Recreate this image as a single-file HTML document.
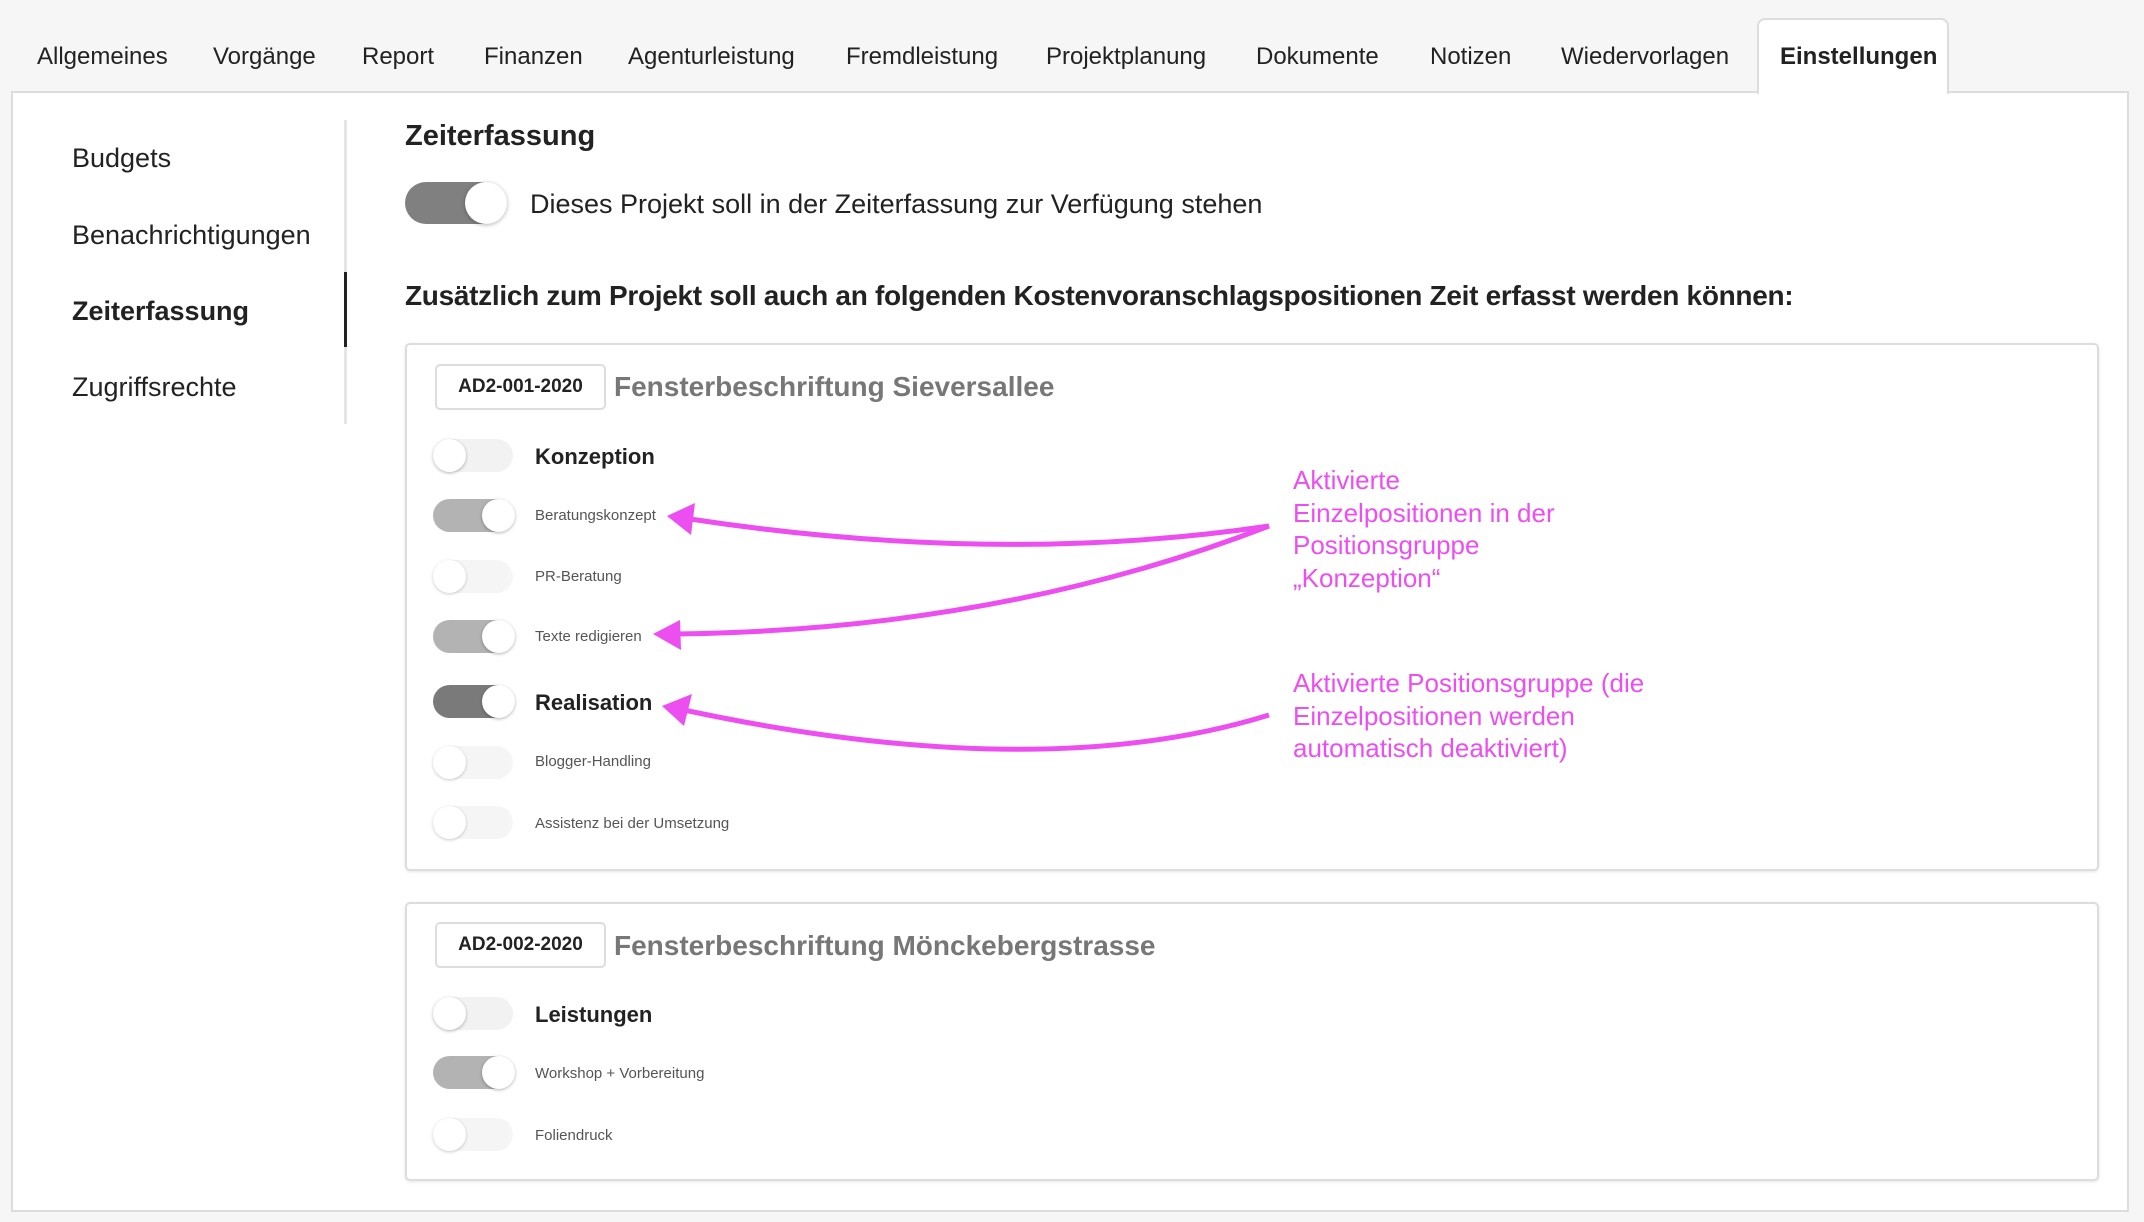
<!DOCTYPE html>
<html><head><meta charset="utf-8"><style>
*{margin:0;padding:0;box-sizing:border-box}
body{width:2144px;height:1222px;background:#f6f6f6;font-family:"Liberation Sans",sans-serif;color:#222;position:relative;overflow:hidden}
.a{position:absolute;white-space:nowrap}
.tab{font-size:24px;top:43px;color:#222}
.panel{position:absolute;left:11px;top:91px;width:2118px;height:1121px;background:#fff;border:2px solid #ddd}
.atab{position:absolute;left:1757px;top:18px;width:192px;height:76px;background:#fff;border:2px solid #ddd;border-bottom:none;border-radius:8px 8px 0 0;z-index:2}
.side{font-size:27px;left:72px;color:#222}
.card{position:absolute;left:405px;width:1694px;background:#fff;border:2px solid #ddd;border-radius:5px;box-shadow:0 1px 3px rgba(0,0,0,.1)}
.badge{position:absolute;left:435px;width:171px;height:46px;border:2px solid #ddd;border-radius:5px;font-size:19px;font-weight:bold;text-align:center;line-height:42px;background:#fff}
.title{font-size:28px;font-weight:bold;color:#777;left:614px}
.tg{position:absolute;left:433px;width:80px;height:33px;border-radius:17px;background:#f2f2f2}
.tg::after{content:"";position:absolute;top:0;width:33px;height:33px;border-radius:50%;background:#fff;box-shadow:0 1px 3px rgba(0,0,0,.3)}
.off::after{left:0}
.on::after{right:-2px}
.l{background:#b3b3b3}.d{background:#7a7a7a}
.gl{left:535px;font-size:22px;font-weight:bold}
.il{left:535px;font-size:15px;color:#555}
.ann{left:1293px;font-size:26px;color:#ec4ef0;line-height:32.5px}
</style></head><body>
<div class="panel"></div>
<div class="atab"></div>
<div class="a tab" style="left:37px">Allgemeines</div>
<div class="a tab" style="left:213px">Vorgänge</div>
<div class="a tab" style="left:362px">Report</div>
<div class="a tab" style="left:484px">Finanzen</div>
<div class="a tab" style="left:628px">Agenturleistung</div>
<div class="a tab" style="left:846px">Fremdleistung</div>
<div class="a tab" style="left:1046px">Projektplanung</div>
<div class="a tab" style="left:1256px">Dokumente</div>
<div class="a tab" style="left:1430px">Notizen</div>
<div class="a tab" style="left:1561px">Wiedervorlagen</div>
<div class="a tab" style="left:1780px;font-weight:bold;z-index:3">Einstellungen</div>

<div class="a side" style="top:143px">Budgets</div>
<div class="a side" style="top:220px">Benachrichtigungen</div>
<div class="a side" style="top:296px;font-weight:bold">Zeiterfassung</div>
<div class="a side" style="top:372px">Zugriffsrechte</div>
<div class="a" style="left:344px;top:120px;width:3px;height:304px;background:#e6e6e6"></div>
<div class="a" style="left:344px;top:272px;width:3px;height:75px;background:#222"></div>

<div class="a" style="left:405px;top:120px;font-size:29px;font-weight:bold">Zeiterfassung</div>
<div class="a" style="left:405px;top:182px;width:101px;height:42px;border-radius:21px;background:#808080"><div style="position:absolute;right:-1px;top:0;width:42px;height:42px;border-radius:50%;background:#fff;box-shadow:0 1px 4px rgba(0,0,0,.3)"></div></div>
<div class="a" style="left:530px;top:189px;font-size:27px">Dieses Projekt soll in der Zeiterfassung zur Verfügung stehen</div>
<div class="a" style="left:405px;top:280px;font-size:28px;font-weight:bold;letter-spacing:-0.3px">Zusätzlich zum Projekt soll auch an folgenden Kostenvoranschlagspositionen Zeit erfasst werden können:</div>

<div class="card" style="top:343px;height:528px"></div>
<div class="badge" style="top:364px">AD2-001-2020</div>
<div class="a title" style="top:371px">Fensterbeschriftung Sieversallee</div>
<div class="tg off" style="top:439px"></div><div class="a gl" style="top:444px">Konzeption</div>
<div class="tg on l" style="top:499px"></div><div class="a il" style="top:507px">Beratungskonzept</div>
<div class="tg off" style="top:560px;opacity:.7"></div><div class="a il" style="top:568px">PR-Beratung</div>
<div class="tg on l" style="top:620px"></div><div class="a il" style="top:628px">Texte redigieren</div>
<div class="tg on d" style="top:685px"></div><div class="a gl" style="top:690px">Realisation</div>
<div class="tg off" style="top:746px;opacity:.7"></div><div class="a il" style="top:753px">Blogger-Handling</div>
<div class="tg off" style="top:806px;opacity:.7"></div><div class="a il" style="top:815px">Assistenz bei der Umsetzung</div>

<div class="card" style="top:902px;height:279px"></div>
<div class="badge" style="top:922px">AD2-002-2020</div>
<div class="a title" style="top:930px">Fensterbeschriftung Mönckebergstrasse</div>
<div class="tg off" style="top:997px"></div><div class="a gl" style="top:1002px">Leistungen</div>
<div class="tg on l" style="top:1056px"></div><div class="a il" style="top:1065px">Workshop + Vorbereitung</div>
<div class="tg off" style="top:1118px;opacity:.7"></div><div class="a il" style="top:1127px">Foliendruck</div>

<div class="a ann" style="top:464px">Aktivierte<br>Einzelpositionen in der<br>Positionsgruppe<br>„Konzeption“</div>
<div class="a ann" style="top:667px">Aktivierte Positionsgruppe (die<br>Einzelpositionen werden<br>automatisch deaktiviert)</div>

<svg class="a" style="left:0;top:0" width="2144" height="1222">
<g fill="none" stroke="#ec4ef0" stroke-width="5">
<path d="M1269 526 Q1000 566 690 519"/>
<path d="M1269 526 Q1000 630 676 634"/>
<path d="M1269 715 Q1040 786 684 710"/>
</g>
<g fill="#ec4ef0">
<polygon points="667,516 695,503 691,535"/>
<polygon points="653,634 680,620 681,650"/>
<polygon points="662,706 692,694 684,726"/>
</g>
</svg>
</body></html>
